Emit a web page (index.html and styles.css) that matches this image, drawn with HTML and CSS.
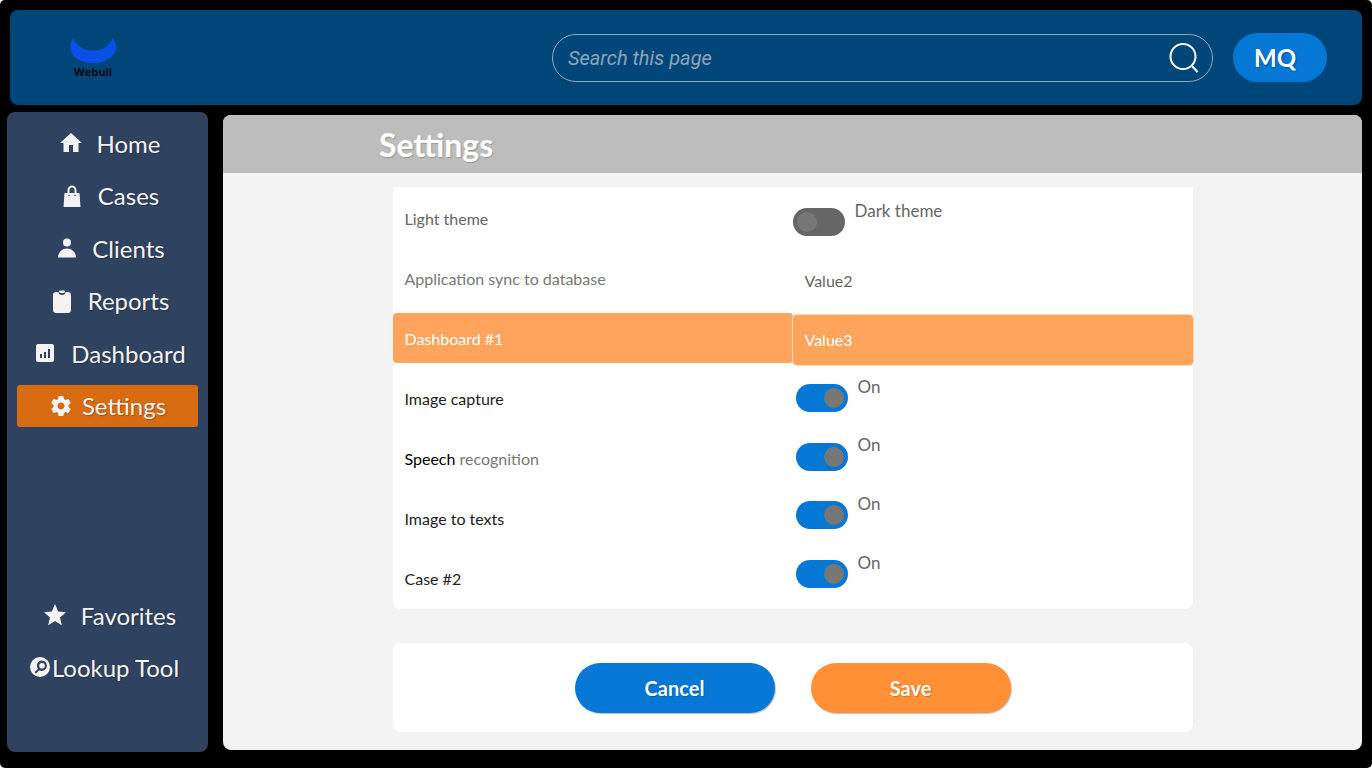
FILE: index.html
```html
<!DOCTYPE html>
<html lang="en">
<head>
    <meta charset="UTF-8">
    <meta name="viewport" content="width=device-width, initial-scale=1.0">
    <title>Settings</title>
    <link rel="stylesheet" href="styles.css">
</head>
<body>
    <header class="topbar">
        <div class="logo">
            <svg class="logo-mark" viewBox="0 0 46 25"><path d="M3.500 0C6 8 14 12.500 23 12.500S40 8 42.500 0C45 3 46 6 46 9C46 18 36 25 23 25S0 18 0 9C0 6 1 3 3.500 0Z"/></svg>
            <span class="logo-text">Webull</span>
        </div>
        <div class="search">
            <span class="search-text">Search this page</span>
            <svg class="search-icon" viewBox="0 0 32 32"><circle cx="15" cy="14.500" r="12.500"/><path d="M24 24l5.500 6"/></svg>
        </div>
        <div class="avatar">MQ</div>
    </header>

    <div class="layout">
        <nav class="sidebar">
            <div class="nav-group">
                <a class="nav-item">
                    <svg class="nav-icon" viewBox="0 0 24 24"><path d="M10 21v-7h4v7h5.500v-9H23L12 2 1 12h3.500v9z"/></svg>
                    <span>Home</span>
                </a>
                <a class="nav-item">
                    <svg class="nav-icon" viewBox="0 0 24 24"><path fill-rule="evenodd" d="M7.500 9V6a4.500 4.500 0 019 0v3h3l1 14H3.500l1-14zm2 0h5V6a2.500 2.500 0 00-5 0zM9 10.700a.8.8 0 100 1.600.8.8 0 000-1.600zm6 0a.8.8 0 100 1.600.8.8 0 000-1.600z"/></svg>
                    <span>Cases</span>
                </a>
                <a class="nav-item">
                    <svg class="nav-icon" viewBox="0 0 24 24"><circle cx="13" cy="6.500" r="4"/><path d="M4 21.500c0-5 4-9 9-9s9 4 9 9z"/></svg>
                    <span>Clients</span>
                </a>
                <a class="nav-item">
                    <svg class="nav-icon" viewBox="0 0 24 24"><path d="M6 3h2.500c0 1.700 1.300 3 3.500 3s3.500-1.300 3.500-3H18c1.700 0 3 1.300 3 3v15c0 1.700-1.300 3-3 3H6c-1.700 0-3-1.300-3-3V6c0-1.700 1.300-3 3-3zm4-1.500h4a1 1 0 011 1c0 1-1.200 1.700-3 1.700s-3-.7-3-1.700a1 1 0 011-1z"/></svg>
                    <span>Reports</span>
                </a>
                <a class="nav-item">
                    <svg class="nav-icon" viewBox="0 0 24 24"><path d="M19 3H5c-1.100 0-2 .9-2 2v14c0 1.100.9 2 2 2h14c1.100 0 2-.9 2-2V5c0-1.100-.9-2-2-2zM9 17H7v-4h2v4zm4 0h-2v-6h2v6zm4 0h-2V8h2v9z"/></svg>
                    <span>Dashboard</span>
                </a>
                <a class="nav-item active">
                    <svg class="nav-icon" viewBox="0 0 24 24"><path d="M19.430 12.980c.04-.32.07-.64.07-.98s-.03-.66-.07-.98l2.110-1.650c.19-.15.24-.42.12-.64l-2-3.460c-.12-.22-.39-.3-.61-.22l-2.490 1c-.52-.4-1.080-.73-1.690-.98l-.38-2.650C14.460 2.180 14.250 2 14 2h-4c-.25 0-.46.18-.49.42l-.38 2.650c-.61.25-1.170.59-1.690.98l-2.490-1c-.23-.09-.49 0-.61.22l-2 3.460c-.13.22-.07.49.12.64l2.110 1.650c-.04.32-.07.65-.07.98s.03.66.07.98l-2.110 1.650c-.19.15-.24.42-.12.64l2 3.460c.12.22.39.3.61.22l2.490-1c.52.4 1.080.73 1.690.98l.38 2.650c.03.24.24.42.49.42h4c.25 0 .46-.18.49-.42l.38-2.650c.61-.25 1.170-.59 1.690-.98l2.490 1c.23.09.49 0 .61-.22l2-3.460c.12-.22.07-.49-.12-.64l-2.110-1.650zM12 15.500c-1.930 0-3.500-1.570-3.500-3.500s1.570-3.500 3.500-3.500 3.500 1.570 3.500 3.500-1.570 3.500-3.500 3.500z"/></svg>
                    <span>Settings</span>
                </a>
            </div>
            <div class="nav-group bottom">
                <a class="nav-item">
                    <svg class="nav-icon" viewBox="0 0 24 24"><path d="M12 18l6.800 4.200-1.800-7.800 6-5.200-7.900-.7L12 1 8.900 8.500 1 9.200l6 5.200-1.800 7.800z"/></svg>
                    <span>Favorites</span>
                </a>
                <a class="nav-item tight">
                    <svg class="nav-icon" viewBox="0 0 24 24"><path fill-rule="evenodd" d="M12 2a10 10 0 110 20 10 10 0 010-20zm2 3.500a5.200 5.200 0 00-4.100 8.400L6.600 17.200 8 18.600l3.300-3.300A5.200 5.200 0 1014 5.500zm0 2.400a2.800 2.800 0 110 5.600 2.800 2.800 0 010-5.600z"/></svg>
                    <span>Lookup Tool</span>
                </a>
            </div>
        </nav>

        <main class="content">
            <h1 class="title">Settings</h1>
            <div class="panel">
                <section class="card options">
                    <div class="labels">
                        <div class="label">Light theme</div>
                        <div class="label muted">Application sync to database</div>
                        <div class="label selected">Dashboard #1</div>
                        <div class="label dark">Image capture</div>
                        <div class="label"><span class="black">Speech</span> <span class="muted">recognition</span></div>
                        <div class="label dark">Image to texts</div>
                        <div class="label dark">Case #2</div>
                    </div>
                    <div class="values">
                        <div class="switch-row off">
                            <span class="switch"><span class="knob"></span></span>
                            <span class="switch-label">Dark theme</span>
                        </div>
                        <div class="value plain">Value2</div>
                        <div class="value selected">Value3</div>
                        <div class="switch-row first">
                            <span class="switch on"><span class="knob"></span></span>
                            <span class="switch-label">On</span>
                        </div>
                        <div class="switch-row">
                            <span class="switch on"><span class="knob"></span></span>
                            <span class="switch-label">On</span>
                        </div>
                        <div class="switch-row">
                            <span class="switch on"><span class="knob"></span></span>
                            <span class="switch-label">On</span>
                        </div>
                        <div class="switch-row">
                            <span class="switch on"><span class="knob"></span></span>
                            <span class="switch-label">On</span>
                        </div>
                    </div>
                </section>
                <section class="card actions">
                    <button class="btn cancel">Cancel</button>
                    <button class="btn save">Save</button>
                </section>
            </div>
        </main>
    </div>
</body>
</html>
```

FILE: styles.css
```css
html, body {
    margin: 0;
    height: 100%;
}
html {
    background-color: #fff;
}
body {
    background-color: #000;
    border-radius: 5px;
    font-family: "Lato", "Open Sans", sans-serif;
    overflow: hidden;
}

/* top bar */
.topbar {
    display: flex;
    align-items: center;
    height: 95px;
    margin: 10px 10px 7px;
    background-color: #004678;
    border-radius: 8px;
}
.logo {
    display: flex;
    flex-direction: column;
    align-items: center;
    width: 46px;
    margin-left: 60px;
    margin-top: 2px;
}
.logo-mark {
    width: 46px;
    height: 25px;
    fill: #0a50e6;
}
.logo-text {
    font-family: "Inter", sans-serif;
    font-size: 11px;
    font-weight: 600;
    letter-spacing: 0.3px;
    line-height: 14px;
    margin-top: 2px;
    color: #000;
}
.search {
    display: flex;
    align-items: center;
    justify-content: space-between;
    box-sizing: border-box;
    width: 661px;
    height: 48px;
    margin-left: 436px;
    padding: 0 12px 0 15px;
    border: 1px solid #8fa9bf;
    border-radius: 24px;
}
.search-text {
    font-family: "Roboto", sans-serif;
    font-style: italic;
    font-size: 20px;
    color: #8ba6be;
}
.search-icon {
    width: 32px;
    height: 32px;
    fill: none;
    stroke: #fff;
    stroke-width: 2;
}
.avatar {
    box-sizing: border-box;
    width: 94px;
    height: 49px;
    margin-left: 20px;
    padding-right: 10px;
    border-radius: 25px;
    background-color: #0478d4;
    color: #fff;
    font-size: 24px;
    font-weight: bold;
    line-height: 50px;
    text-align: center;
    text-shadow: 1px 1px 2px rgba(0, 0, 0, 0.3);
}

/* layout */
.layout {
    display: flex;
    height: 640px;
    margin-left: 7px;
}

/* sidebar */
.sidebar {
    display: flex;
    flex-direction: column;
    justify-content: space-between;
    box-sizing: border-box;
    width: 201px;
    padding: 10px 10px 64px;
    background-color: #2f4260;
    border-radius: 8px;
}
.nav-group {
    display: flex;
    flex-direction: column;
    gap: 10.500px;
}
.nav-group.bottom {
    gap: 10px;
}
.nav-item {
    display: flex;
    align-items: center;
    justify-content: center;
    gap: 14px;
    height: 42px;
    padding-left: 4px;
    color: #f3f3f3;
    font-size: 24px;
    text-shadow: 1px 1px 1px rgba(0, 0, 0, 0.25);
}
.nav-item.active {
    gap: 9px;
    padding-left: 0;
    background-color: #d76b12;
    border-radius: 3px;
}
.nav-item.tight {
    gap: 0;
    padding-left: 0;
    padding-right: 8px;
}
.nav-icon {
    width: 24px;
    height: 24px;
    fill: #f3f3f3;
    flex-shrink: 0;
}

/* main */
.content {
    display: flex;
    flex-direction: column;
    width: 1139px;
    height: 635px;
    margin: 3px 0 0 15px;
    background-color: #f3f3f3;
    border-radius: 8px;
    overflow: hidden;
}
.title {
    box-sizing: border-box;
    height: 58px;
    margin: 0;
    padding-left: 156px;
    background-color: #bdbdbd;
    color: #fff;
    font-size: 32px;
    font-weight: bold;
    line-height: 60px;
    text-shadow: 1px 1px 1px rgba(0, 0, 0, 0.2);
}
.panel {
    display: flex;
    flex-direction: column;
    gap: 34px;
    width: 800px;
    margin: 14px 0 0 169.500px;
}
.card {
    background-color: #fff;
    border-radius: 0 0 8px 8px;
}
.options {
    display: grid;
    grid-template-columns: 400px 400px;
    height: 422px;
}
.labels {
    padding-top: 1px;
}
.label {
    box-sizing: border-box;
    height: 60px;
    padding: 1px 12px 0;
    color: #666;
    font-size: 16px;
    line-height: 60px;
}
.label.selected {
    height: 50px;
    margin: 5px 0;
    line-height: 50px;
    border-radius: 4px;
}
.selected {
    background-color: #ffa45c;
    color: #fff;
}
.label.muted {
    color: #777;
}
.label.selected {
    color: #fff;
}
.muted {
    color: #777;
}
.black {
    color: #000;
}
.label.dark {
    color: #222;
}
.values {
    display: flex;
    flex-direction: column;
}
.switch-row {
    display: flex;
    align-items: flex-start;
    gap: 10px;
    height: 58.700px;
    margin-left: 3px;
    color: #666;
    font-size: 17px;
}
.switch-row.off {
    height: 47px;
    margin-left: 0;
    padding-top: 21px;
}
.switch-row.first {
    margin-top: 19px;
}
.switch {
    display: flex;
    align-items: center;
    box-sizing: border-box;
    width: 52px;
    height: 28px;
    padding: 0 4px;
    border-radius: 14px;
    background-color: #666;
}
.switch.on {
    justify-content: flex-end;
    background-color: #0478d4;
}
.knob {
    width: 20px;
    height: 20px;
    border-radius: 50%;
    background-color: #777;
}
.switch-label {
    margin-top: -7.500px;
    line-height: 20px;
}
.value {
    box-sizing: border-box;
    height: 50px;
    padding: 0 12px;
    color: #666;
    font-size: 16px;
    line-height: 50px;
}
.value.plain {
    height: 52px;
    margin-bottom: 8px;
    line-height: 52px;
}
.value.selected {
    border-radius: 4px;
    color: #fff;
    box-shadow: 0 0 0 1px #ffd9bb;
}
.actions {
    display: flex;
    justify-content: center;
    align-items: center;
    gap: 36px;
    height: 89px;
    border-radius: 8px;
}
.btn {
    width: 200px;
    height: 50px;
    border: none;
    border-radius: 25px;
    color: #fff;
    font-family: inherit;
    font-size: 20px;
    font-weight: bold;
    box-shadow: 1px 1px 1px rgba(0, 0, 0, 0.25);
    text-shadow: 1px 1px 1px rgba(0, 0, 0, 0.2);
}
.cancel {
    background-color: #0478d4;
}
.save {
    background-color: #ff9035;
}
```
